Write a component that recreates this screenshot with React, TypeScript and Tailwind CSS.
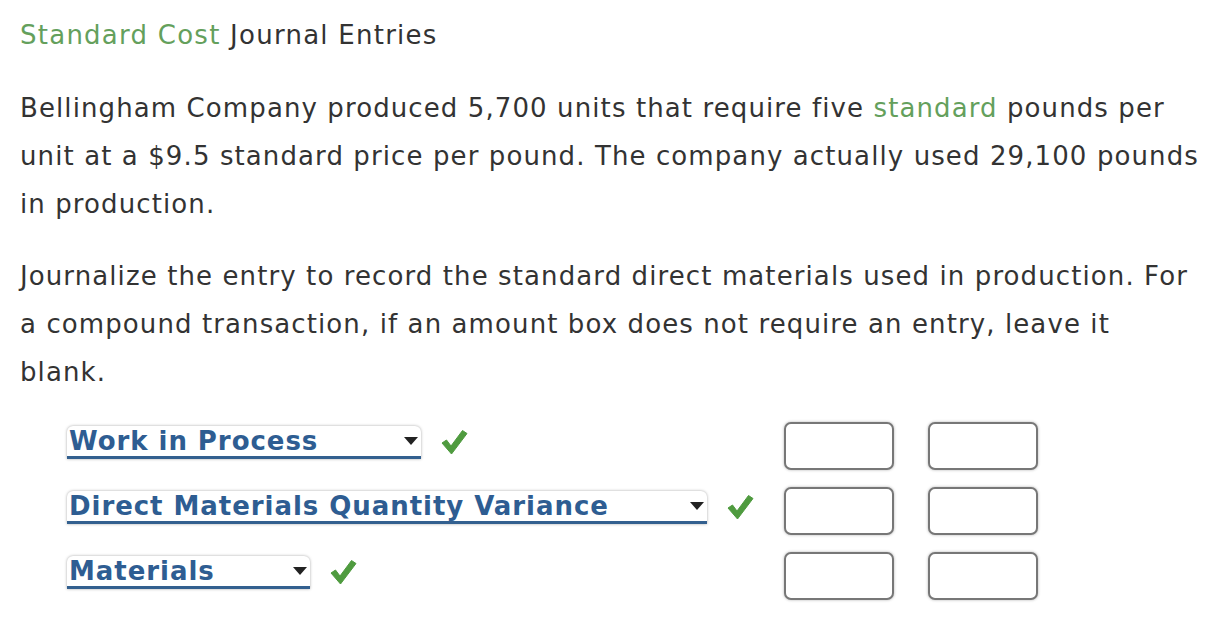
const rows = [
  { account: 'Work in Process', width: 'w-[354px]' },
  { account: 'Direct Materials Quantity Variance', width: 'w-[640px]' },
  { account: 'Materials', width: 'w-[243px]' },
]

function CheckMark() {
  return (
    <svg width="28" height="26" viewBox="0 0 28 26" className="shrink-0">
      <path
        d="M2 14 L6.5 11 L11 17 L22.5 1.5 L27 4.5 L11.5 25 Z"
        fill="#4f9b3f"
        stroke="#4f9b3f"
        strokeWidth="1"
        strokeLinejoin="round"
      />
    </svg>
  )
}

function AccountSelect({ label, width }: { label: string; width: string }) {
  return (
    <div
      className={`${width} h-[33px] flex items-center justify-between bg-white rounded-t-[6px] border-b-[3px] border-[#33608f] shadow-[0_0_3px_rgba(0,0,0,0.35)] pl-[2px] pr-[3px]`}
    >
      <span className="text-[26px] font-bold text-[#2e5d92] leading-none tracking-[0.95px] whitespace-nowrap">
        {label}
      </span>
      <span className="w-0 h-0 border-l-[7px] border-r-[7px] border-t-[8px] border-l-transparent border-r-transparent border-t-[#222]" />
    </div>
  )
}

function AmountBox() {
  return (
    <div className="w-[110px] h-[48px] rounded-[7px] border-2 border-[#777] bg-white shadow-[0_0_3px_rgba(0,0,0,0.3)]" />
  )
}

export default function App() {
  return (
    <div className="bg-white min-h-[622px] pl-[20px] pt-[14px] text-[#333] font-['DejaVu_Sans',Verdana,sans-serif] tracking-[1.1px]">
      <h1 className="text-[26px] leading-[42px] font-normal tracking-[1.25px]">
        <span className="text-[#64a05c]">Standard Cost</span> Journal Entries
      </h1>

      <p className="mt-[28px] text-[26px] leading-[48px] whitespace-nowrap">
        <span className="block">
          Bellingham Company produced 5,700 units that require five{' '}
          <span className="text-[#64a05c]">standard</span> pounds per
        </span>
        <span className="block">unit at a $9.5 standard price per pound. The company actually used 29,100 pounds</span>
        <span className="block">in production.</span>
      </p>

      <p className="mt-[24px] text-[26px] leading-[48px] whitespace-nowrap">
        <span className="block">
          Journalize the entry to record the standard direct materials used in production. For
        </span>
        <span className="block">a compound transaction, if an amount box does not require an entry, leave it</span>
        <span className="block">blank.</span>
      </p>

      <div className="mt-[26px] ml-[47px] flex flex-col gap-[17px]">
        {rows.map((r) => (
          <div key={r.account} className="flex items-center">
            <div className="w-[717px] flex items-center gap-[19px] -mt-[8px]">
              <AccountSelect label={r.account} width={r.width} />
              <CheckMark />
            </div>
            <div className="flex gap-[34px]">
              <AmountBox />
              <AmountBox />
            </div>
          </div>
        ))}
      </div>
    </div>
  )
}
